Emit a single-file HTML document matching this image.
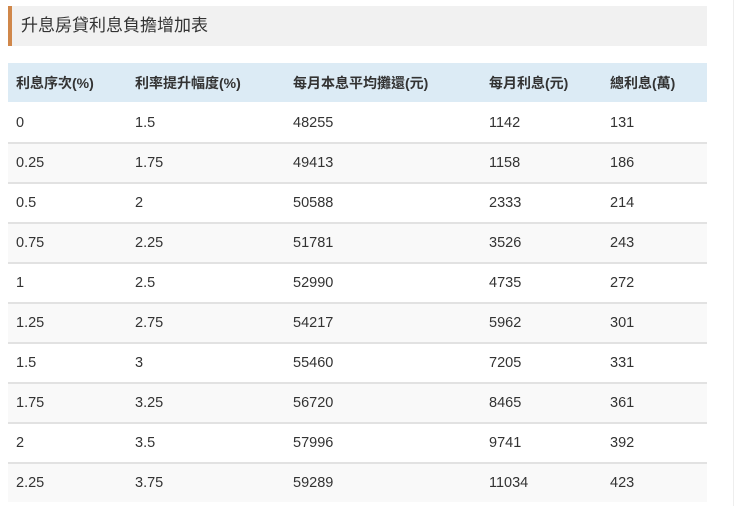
<!DOCTYPE html>
<html><head><meta charset="utf-8"><style>
body{margin:0;background:#fff;font-family:"Liberation Sans","Noto Sans CJK TC",sans-serif;width:740px;height:506px;overflow:hidden;position:relative}
.t{position:absolute;left:8px;top:6px;height:40px;background:#f1f1f1;border-left:4px solid #d0874a;font-size:17px;color:#333;line-height:40px;padding-left:9px;width:686px}
table{position:absolute;left:8px;top:63px;width:699px;border-collapse:collapse;font-size:14.5px;color:#333}
th{background:#dcebf5;height:39px;text-align:left;font-weight:bold;padding:0 0 0 8px;font-size:14px;color:#333}
td{height:38px;padding:0 0 0 8px;border-top:2px solid #e2e2e2}
tr:nth-child(odd) td{background:#f9f9f9}
.f td{border-top-color:#fff}
.v{position:absolute;left:733px;top:0;width:1px;height:506px;background:#eee}
</style></head><body>
<div class="t">升息房貸利息負擔增加表</div>
<div class="v"></div>
<table>
<colgroup><col style="width:119px"><col style="width:158px"><col style="width:196px"><col style="width:121px"><col></colgroup>
<tr><th>利息序次(%)</th><th>利率提升幅度(%)</th><th>每月本息平均攤還(元)</th><th>每月利息(元)</th><th>總利息(萬)</th></tr>
<tr class="f"><td>0</td><td>1.5</td><td>48255</td><td>1142</td><td>131</td></tr>
<tr><td>0.25</td><td>1.75</td><td>49413</td><td>1158</td><td>186</td></tr>
<tr><td>0.5</td><td>2</td><td>50588</td><td>2333</td><td>214</td></tr>
<tr><td>0.75</td><td>2.25</td><td>51781</td><td>3526</td><td>243</td></tr>
<tr><td>1</td><td>2.5</td><td>52990</td><td>4735</td><td>272</td></tr>
<tr><td>1.25</td><td>2.75</td><td>54217</td><td>5962</td><td>301</td></tr>
<tr><td>1.5</td><td>3</td><td>55460</td><td>7205</td><td>331</td></tr>
<tr><td>1.75</td><td>3.25</td><td>56720</td><td>8465</td><td>361</td></tr>
<tr><td>2</td><td>3.5</td><td>57996</td><td>9741</td><td>392</td></tr>
<tr><td>2.25</td><td>3.75</td><td>59289</td><td>11034</td><td>423</td></tr>
</table>
</body></html>
